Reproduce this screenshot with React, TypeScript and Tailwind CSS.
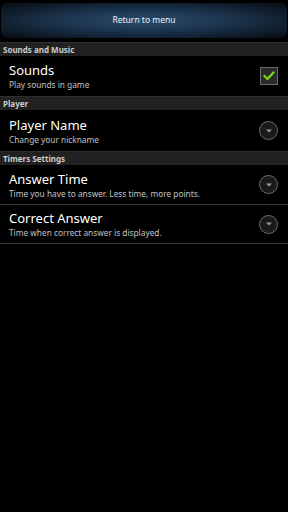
import React from "react";

function Header({ label }: { label: string }) {
  return (
    <div className="h-[14px] bg-[#212121] border-t border-[#2e2e2e] flex items-center pl-[3px] text-[8px] font-bold text-[#cdcdcd] leading-none">
      {label}
    </div>
  );
}

function Dropdown() {
  return (
    <div className="w-[19px] h-[19px] rounded-full border border-[#6a6a6a] bg-[#1a1a1a] flex items-center justify-center">
      <svg width="8" height="6" viewBox="0 0 8 6">
        <path d="M1 1.5 L7 1.5 L4 4.5 Z" fill="#9a9a9a" />
      </svg>
    </div>
  );
}

function Check() {
  return (
    <div className="w-[18px] h-[18px] border border-[#6a6a6a] bg-[#2a2a2a] flex items-center justify-center">
      <svg width="12" height="10" viewBox="0 0 12 10">
        <path d="M1.5 5 L4.5 8 L10.5 1.5" stroke="#7fd11b" strokeWidth="2.4" fill="none" strokeLinecap="round" strokeLinejoin="round" />
      </svg>
    </div>
  );
}

function Row({ title, sub, right, h, border }: { title: string; sub: string; right: React.ReactNode; h: string; border?: boolean }) {
  return (
    <div className={`${h} flex items-center pl-[9px] pr-[10px] ${border ? "border-b border-[#3a3a3a]" : ""}`}>
      <div className="flex-1 flex flex-col">
        <div className="text-[13px] leading-[17px] text-white">{title}</div>
        <div className="text-[8.3px] leading-[11px] text-[#c0c0c0]">{sub}</div>
      </div>
      {right}
    </div>
  );
}

export default function App() {
  return (
    <div className="w-[288px] h-[512px] bg-black overflow-hidden" style={{ fontFamily: '"Noto Sans", "DejaVu Sans", sans-serif' }}>
      <div className="pt-[3px] px-[1px] pb-[4px]">
        <div className="h-[35px] rounded-[6px] bg-[radial-gradient(ellipse_at_center,#2b4d6d_0%,#1c3550_40%,#0c1622_85%,#070b12_100%)] flex items-center justify-center text-[8.5px] text-[#e8eef4]">
          Return to menu
        </div>
      </div>
      <Header label="Sounds and Music" />
      <Row title="Sounds" sub="Play sounds in game" right={<Check />} h="h-[40px]" />
      <Header label="Player" />
      <Row title="Player Name" sub="Change your nickname" right={<Dropdown />} h="h-[41px]" />
      <Header label="Timers Settings" />
      <Row title="Answer Time" sub="Time you have to answer. Less time, more points." right={<Dropdown />} h="h-[40px]" border />
      <Row title="Correct Answer" sub="Time when correct answer is displayed." right={<Dropdown />} h="h-[39px]" border />
    </div>
  );
}
